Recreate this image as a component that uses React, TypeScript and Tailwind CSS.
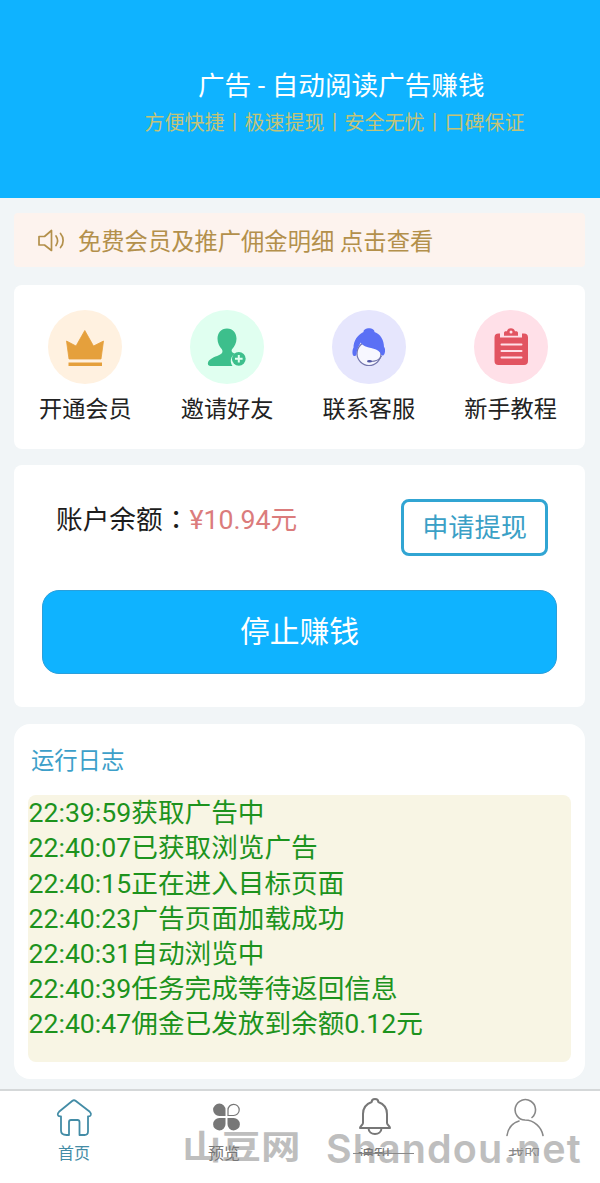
import type { ReactNode } from 'react';

const logs = [
  '22:39:59获取广告中',
  '22:40:07已获取浏览广告',
  '22:40:15正在进入目标页面',
  '22:40:23广告页面加载成功',
  '22:40:31自动浏览中',
  '22:40:39任务完成等待返回信息',
  '22:40:47佣金已发放到余额0.12元',
];

function Crown() {
  return (
    <svg viewBox="0 0 74 74" className="size-full" fill="#e5a03c">
      <path d="M18.500 31 L28 36 L36.800 20.500 L45.500 36 L55.500 31 L53 49 H21 Z" strokeLinejoin="round" stroke="#e5a03c" strokeWidth=".8" />
      <rect x="20.500" y="52.500" width="33.500" height="3.500" />
    </svg>
  );
}

function Invite() {
  return (
    <svg viewBox="0 0 74 74" className="size-full" fill="#3dbf8c">
      <path d="M37 18.500c6 0 9.500 4.600 9.500 10.200 0 4.300-2 7.800-4.300 10.300-1 1.200-.7 3 .7 3.700l2 1c-4.600 2.800-5.200 8.300-2.400 12.300H20.500c-3.300 0-3.200-3.600-1.200-5.700 3.300-3.500 9.200-4.400 12-6.600 1.500-1.200 1.500-3.200.4-4.700-2.300-2.700-4.200-6-4.200-10.300 0-5.600 3.500-10.200 9.500-10.200z" />
      <circle cx="48.800" cy="48.800" r="6.900" />
      <path d="M48.800 45v7.600M45 48.800h7.600" stroke="#e0fff0" strokeWidth="2" />
    </svg>
  );
}

function Service() {
  return (
    <svg viewBox="0 0 74 74" className="size-full">
      <circle cx="37" cy="43.500" r="12" fill="#f7f7ff" stroke="#7476ad" strokeWidth="1.200" />
      <path d="M31.500 22c0-5 11-5 11 0 6 2 9.500 8 9.500 15 1.500 1 1.500 7-.5 8.200-1.500.5-2.200.2-2.500-.7-1.500-4-5-5.500-10-6.500-4.500-.8-8-2-10.500-5.500-1.500 4-3.500 5.500-4 11.500-.4 2-1.500 2.500-3 1.800-1.500-1-1.300-6.500 0-8 0-7 4-13 10-15.800z" fill="#5b70f5" />
      <path d="M49.500 46c-2 4-5.500 5.500-11 5.500" fill="none" stroke="#7476ad" strokeWidth="1.200" />
      <ellipse cx="37.500" cy="51.200" rx="2.500" ry="1.300" fill="#5055a5" />
    </svg>
  );
}

function Guide() {
  return (
    <svg viewBox="0 0 74 74" className="size-full">
      <path d="M26 23.500h-1.500a4 4 0 0 0-4 4v23.500a4 4 0 0 0 4 4h25.500a4 4 0 0 0 4-4V27.500a4 4 0 0 0-4-4H48v4H26z" fill="#e25461" />
      <path d="M30 25.700v-2.900c0-1 .8-1.600 1.800-1.600h1.200c.8-4 7.200-4 8 0h1.200c1 0 1.800.6 1.800 1.600v2.900z" fill="#e25461" />
      <circle cx="37" cy="22" r="1.500" fill="#ffe0e8" />
      <path d="M27.500 34.500h20M27.500 41h20M27.500 47.500h20" stroke="#ffe0e8" strokeWidth="2" strokeLinecap="round" />
    </svg>
  );
}

function Feature({ label, tint, children }: { label: string; tint: string; children: ReactNode }) {
  return (
    <div className="flex flex-col items-center">
      <div className={`size-[74px] rounded-full ${tint}`}>{children}</div>
      <span className="mt-[7px] text-[23.2px] leading-9 whitespace-nowrap text-[#222]">{label}</span>
    </div>
  );
}

function Tab({ label, color, clip = '', children }: { label: string; color: string; clip?: string; children: ReactNode }) {
  return (
    <div className={`flex flex-col items-center pt-[5px] pr-[2px] ${color}`}>
      <div className="h-[44px] w-[44px]">{children}</div>
      <span className={`mt-[3px] text-[16px] leading-[22px] ${clip}`}>{label}</span>
    </div>
  );
}

export default function App() {
  return (
    <div className="flex h-[1183px] w-[600px] flex-col overflow-hidden bg-[#f1f5f7] font-['Roboto','Noto_Sans_CJK_SC',sans-serif]">
      <header className="flex h-[198px] shrink-0 flex-col bg-[#0fb3ff] pt-[68px] whitespace-nowrap">
        <h1 className="pl-[198px] text-[26.6px] leading-[36px] text-white">广告 - 自动阅读广告赚钱</h1>
        <p className="mt-[5px] pl-[144.5px] text-[20px] leading-[28px] text-[#c4c377]">方便快捷丨极速提现丨安全无忧丨口碑保证</p>
      </header>

      <main className="flex flex-1 flex-col pr-[15px] pl-[14px]">
        <div className="mt-[15px] flex h-[54px] items-center rounded bg-[#fdf3ee] pl-[23px] text-[#b3904b]">
          <svg width="30" height="26" viewBox="0 0 30 26" fill="none" stroke="currentColor" strokeWidth="1.700" strokeLinejoin="round" strokeLinecap="round">
            <path d="M2 9.500h5.500L14.500 3.500v20L7.500 18H2z" />
            <path d="M19 9c2 3 2 6.500 0 9.500M23.500 6.500c3.500 4 3.500 10 0 14" />
          </svg>
          <span className="ml-[11px] pt-[3px] text-[23.3px] leading-8 whitespace-nowrap">免费会员及推广佣金明细 点击查看</span>
        </div>

        <section className="mt-[18px] grid h-[164px] grid-cols-4 rounded-lg bg-white pt-[25px] pr-[3.5px] pl-[0.5px]">
          <Feature label="开通会员" tint="bg-[#fff1e0]"><Crown /></Feature>
          <Feature label="邀请好友" tint="bg-[#e0fff0]"><Invite /></Feature>
          <Feature label="联系客服" tint="bg-[#e6e6fd]"><Service /></Feature>
          <Feature label="新手教程" tint="bg-[#ffe0e8]"><Guide /></Feature>
        </section>

        <section className="mt-4 h-[242px] rounded-lg bg-white pt-[34px] pr-[28px] pl-[28px]">
          <div className="flex items-start justify-between pr-[9px] pl-[14px]">
            <p className="pt-[1px] text-[26.7px] leading-9 whitespace-nowrap text-[#1c1c1c]">
              账户余额<span className="font-['Noto_Sans_CJK_TC',sans-serif]">：</span><span className="text-[#db7c7c]">¥10.94元</span>
            </p>
            <button className="h-[57px] w-[147px] rounded-lg border-3 border-[#31a5d3] pt-px text-[26.2px] leading-8 text-[#3aa0c6]">申请提现</button>
          </div>
          <button className="mt-[34px] h-[84px] w-[515px] rounded-[17px] border border-[#2a9fdb] bg-[#0fb3ff] text-[29.8px] text-white">停止赚钱</button>
        </section>

        <section className="mt-[17px] h-[355px] rounded-2xl bg-white px-[14px] pt-[19px]">
          <h2 className="pl-[3px] text-[23.3px] leading-9 text-[#3d9fc9]">运行日志</h2>
          <div className="mt-[16px] h-[267px] rounded-lg bg-[#f8f5e4] pt-[1.4px] pl-[0.5px] text-[26.65px] leading-[35.1px] whitespace-nowrap text-[#1d931d]">
            {logs.map((line) => <p key={line}>{line}</p>)}
          </div>
        </section>
      </main>

      <nav className="relative grid h-[94px] shrink-0 grid-cols-4 border-t-2 border-[#d5d8d9] bg-white">
        <div className="pointer-events-none absolute top-[36px] left-[182px] flex whitespace-nowrap text-[#bebebe]">
          <span className="w-[144px] origin-top scale-y-[0.84] text-[39.5px] leading-[50px] font-bold">山豆网</span>
          <span className="-mt-[3px] font-['Inter',sans-serif] text-[39.5px] leading-[50px] font-semibold tracking-[1.1px]">Shandou.net</span>
        </div>
        <Tab label="首页" color="text-[#438ca6]">
          <svg viewBox="0 0 44 44" fill="none" stroke="currentColor" strokeWidth="1.800" strokeLinejoin="round">
            <path d="M20.500 4.800q1.500-1.200 3 0L37.800 15.800q1.600 1.500 1 3.200-.7 1.700-2.800 1.400V35.500q0 3.500-3.500 3.500h-5V26q0-2-2-2h-6.500q-2 0-2 2v13h-2.500q-5.500 0-5.500-4.500V20.400q-2.800.3-3.200-1.700-.2-1.600 1.200-2.900z" />
          </svg>
        </Tab>
        <Tab label="预览" color="relative text-[#777]">
          <svg viewBox="0 0 44 44" fill="currentColor" className="translate-x-px">
            <path d="M22.500 20H16.500a6.200 6.200 0 1 1 6-6zM16.500 22h6v6a6.200 6.200 0 1 1-6-6zM24.500 22h6a6.200 6.200 0 1 1-6 6z" />
            <path d="M25 19.500V14a5.600 5.600 0 1 1 5.500 5.500z" fill="none" stroke="currentColor" strokeWidth="1.200" />
          </svg>
        </Tab>
        <Tab label="通知" color="relative text-[#777] after:absolute after:top-[62px] after:left-[53px] after:h-px after:w-[61px] after:bg-[#888]" clip="[clip-path:inset(5px_0_9px_0)]">
          <svg viewBox="0 0 44 44" fill="none" stroke="currentColor" strokeWidth="2" strokeLinejoin="round" className="translate-x-px">
            <path d="M18.700 6c0-4 6.600-4 6.600 0 5.700 2 8.700 6 8.700 12v9c0 2 3 3 3 5H7c0-2 3-3 3-5v-9c0-6 3-10 8.700-12zM15.500 32c0 8 13 8 13 0" />
          </svg>
        </Tab>
        <Tab label="我的" color="relative text-[#888]" clip="[clip-path:inset(5px_0_9px_0)]">
          <svg viewBox="0 0 44 44" fill="none" stroke="currentColor" strokeWidth="1.600" strokeLinecap="round" className="translate-x-px">
            <path d="M29 21.500A10.200 10.200 0 1 0 22 24c9 0 16.500 7 18 15.500M16 25C9.500 27 5 32.500 4 39.500" />
          </svg>
        </Tab>
      </nav>
    </div>
  );
}
